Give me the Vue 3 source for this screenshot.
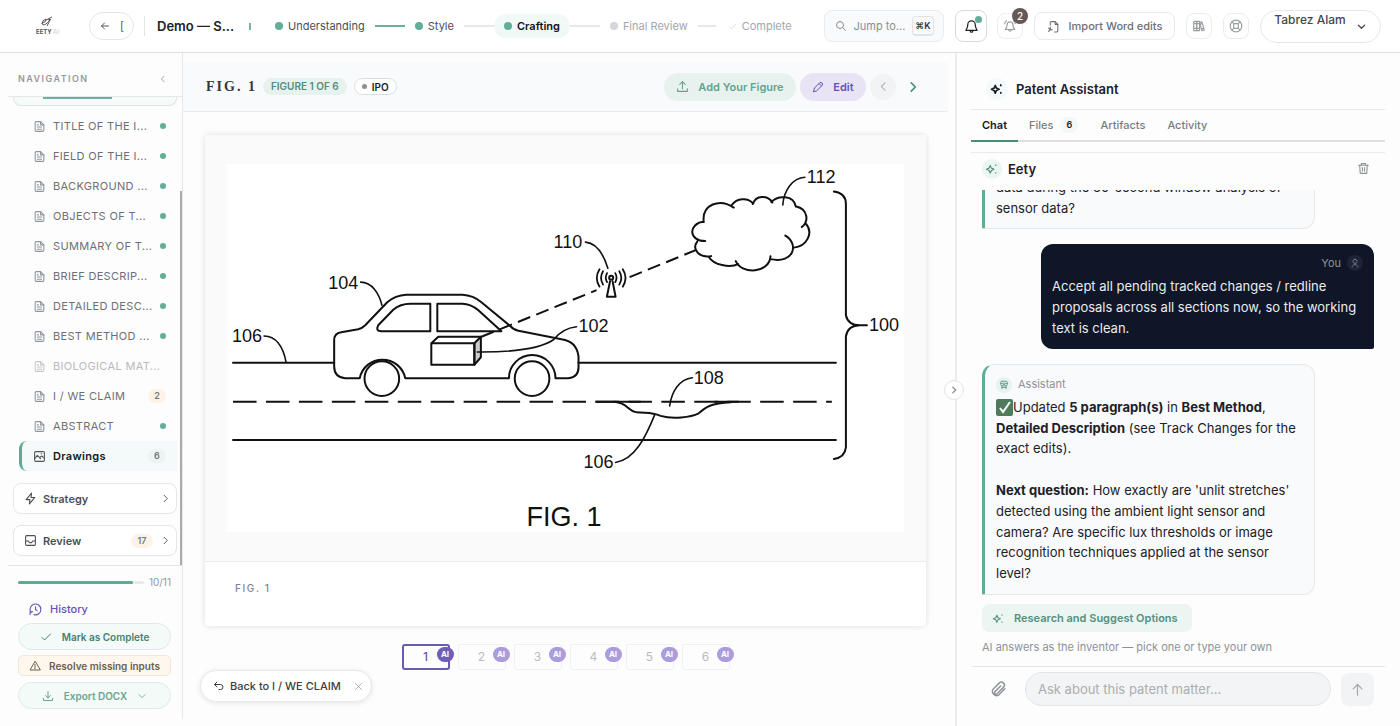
<script setup>
import { h, ref } from 'vue'

const shapes = {
  back: ['M19 12H5', 'M11 6l-6 6 6 6'],
  search: ['M10 3a7 7 0 1 0 0 14a7 7 0 0 0 0-14z', 'M15 15l6 6'],
  bell: ['M12 3a6 6 0 0 0-6 6c0 5-2 7-3 9h18c-1-2-3-4-3-9a6 6 0 0 0-6-6z', 'M10 18v1a2 2 0 0 0 4 0v-1'],
  ring: ['M12 5a5 5 0 0 0-5 5c0 4-1 6-3 8h16c-2-2-3-4-3-8a5 5 0 0 0-5-5z', 'M10 18v1a2 2 0 0 0 4 0v-1', 'M3 8c0-2 1-4 3-5', 'M21 8c0-2-1-4-3-5'],
  importDoc: ['M6 9V5a2 2 0 0 1 2-2h7l5 5v12a2 2 0 0 1-2 2h-4', 'M15 3v5h5', 'M6 13v5h4', 'M3 15l3 3-3 3'],
  books: ['M3 4h5v16H3z', 'M8 4h5v16H8z', 'M3 8h10', 'M3 16h10', 'M13 6l4-1 4 14-4 1z', 'M14 9l4-1', 'M16 17l4-1'],
  buoy: ['M12 2a10 10 0 1 0 0 20a10 10 0 0 0 0-20z', 'M10 8h4q2 0 2 2v4q0 2-2 2h-4q-2 0-2-2v-4q0-2 2-2z', 'M5 5l3 3', 'M19 5l-3 3', 'M5 19l3-3', 'M19 19l-3-3'],
  down: ['M5 9l7 7 7-7'],
  left: ['M15 5l-7 7 7 7'],
  right: ['M9 5l7 7-7 7'],
  doc: ['M14 3H6a2 2 0 0 0-2 2v14a2 2 0 0 0 2 2h12a2 2 0 0 0 2-2V9z', 'M14 3v6h6', 'M8 9h2', 'M8 13h8', 'M8 17h8'],
  image: ['M5 3h14a2 2 0 0 1 2 2v14a2 2 0 0 1-2 2H5a2 2 0 0 1-2-2V5a2 2 0 0 1 2-2z', 'M3 16l5-6 6 6', 'M12 14l4-3 5 4', 'M15 7h1'],
  bolt: ['M14 2L4 14h7l-1 8 10-12h-7z'],
  inbox: ['M5 3h14a2 2 0 0 1 2 2v14a2 2 0 0 1-2 2H5a2 2 0 0 1-2-2V5a2 2 0 0 1 2-2z', 'M3 13h5l2 3h4l2-3h5'],
  history: ['M4 18a10 10 0 1 1 5 3.500', 'M2 21v-5h5', 'M12 7v5l3 2'],
  check: ['M4 13l5 5L21 6'],
  warn: ['M12 3L2 20h20z', 'M12 9v6', 'M12 17v1'],
  download: ['M12 3v13', 'M7 11l5 5 5-5', 'M3 17v4h18v-4'],
  upload: ['M12 16V3', 'M7 8l5-5 5 5', 'M3 16v5h18v-5'],
  pencil: ['M3 21l2-7L16 3q2-1 4 1t1 4L10 19z', 'M14 5l5 5'],
  undo: ['M8 4L3 9l5 5', 'M3 9h12a5 5 0 0 1 0 10h-3'],
  close: ['M4 4l16 16', 'M20 4L4 20'],
  spark: ['M9 6l2 4.500 4.500 2-4.500 2L9 19l-2-4.500-4.500-2 4.500-2z', 'M18.500 5v1', 'M18.500 18v1'],
  trash: ['M3 6h18', 'M8 6V3h8v3', 'M5 6l1 15h12l1-15', 'M10 10v7', 'M14 10v7'],
  person: ['M12 3a5 5 0 1 0 0 10a5 5 0 0 0 0-10z', 'M12 13v3', 'M5 22c0-4 3-6 7-6s7 2 7 6'],
  robot: ['M7 3h10a3 3 0 0 1 3 3v5a3 3 0 0 1-3 3H7a3 3 0 0 1-3-3V6a3 3 0 0 1 3-3z', 'M4 8h16', 'M7 14v7', 'M17 14v7', 'M7 18h10', 'M10 11h4'],
  clip: ['M21 11l-9 9a6 6 0 0 1-8-8l9-9a4 4 0 0 1 6 6l-9 9a2 2 0 0 1-3-3l8-8'],
  up: ['M12 21V4', 'M5 11l7-7 7 7'],
}

const Icon = (props) =>
  h(
    'svg',
    {
      width: props.size || 14,
      height: props.size || 14,
      viewBox: '0 0 24 24',
      fill: 'none',
      stroke: 'currentColor',
      'stroke-width': props.weight || 2,
      'stroke-linecap': 'round',
      'stroke-linejoin': 'round',
      'aria-hidden': 'true',
    },
    shapes[props.name].map((d) => h('path', { d }))
  )
Icon.props = ['name', 'size', 'weight']

const sections = [
  { name: 'TITLE OF THE I...', done: true },
  { name: 'FIELD OF THE I...', done: true },
  { name: 'BACKGROUND ...', done: true },
  { name: 'OBJECTS OF T...', done: true },
  { name: 'SUMMARY OF T...', done: true },
  { name: 'BRIEF DESCRIP...', done: true },
  { name: 'DETAILED DESC...', done: true },
  { name: 'BEST METHOD ...', done: true },
  { name: 'BIOLOGICAL MAT...', muted: true },
  { name: 'I / WE CLAIM', count: 2 },
  { name: 'ABSTRACT', done: true },
]
const figures = [1, 2, 3, 4, 5, 6]
const current = ref(1)
const draft = ref('')
</script>

<template>
  <div class="app">
    <header class="top">
      <svg class="logo" width="26" height="20" viewBox="0 0 26 20" role="img" aria-label="Eety AI">
        <path d="M6 8q0-4 4-5q1 3-4 4q0 3 4 1q3-2 4-5q-1 4-3 7M10 4l6-3M12 3l3 1" fill="none" stroke="#555" stroke-width="1" />
        <text x="0" y="18" class="logo-text">EETY</text>
        <text x="17" y="18" class="logo-text pale">AI</text>
      </svg>
      <button class="back" aria-label="Back"><Icon name="back" :size="12" /><span>[</span></button>
      <span class="rule"></span>
      <h1>Demo — S...</h1>
      <span class="tick"></span>
      <ol class="steps">
        <li><i class="dot"></i>Understanding</li>
        <li class="line done" aria-hidden="true"></li>
        <li><i class="dot"></i>Style</li>
        <li class="line" aria-hidden="true"></li>
        <li class="now"><i class="dot"></i>Crafting</li>
        <li class="line" aria-hidden="true"></li>
        <li class="later"><i class="dot"></i>Final Review</li>
        <li class="line short" aria-hidden="true"></li>
        <li class="later"><Icon name="check" :size="9" />Complete</li>
      </ol>
      <button class="jump"><Icon name="search" :size="12" /><span>Jump to...</span><kbd>⌘K</kbd></button>
      <button class="sq big" aria-label="Notifications"><Icon name="bell" :size="15" /><i class="dot on"></i></button>
      <button class="sq alerts" aria-label="Alerts"><Icon name="ring" :size="14" /><b class="count">2</b></button>
      <button class="import"><Icon name="importDoc" :size="13" />Import Word edits</button>
      <button class="sq lib" aria-label="Library"><Icon name="books" :size="14" /></button>
      <button class="sq help" aria-label="Help"><Icon name="buoy" :size="14" /></button>
      <button class="user"><span>Tabrez Alam</span><Icon name="down" :size="11" :weight="3" /></button>
    </header>

    <div class="body">
      <aside class="side">
        <div class="side-head"><h2>NAVIGATION</h2><button class="bare" aria-label="Collapse"><Icon name="left" :size="10" /></button></div>
        <div class="scroll">
          <div class="clipped"><i></i></div>
          <nav aria-label="Sections">
            <a v-for="s in sections" :key="s.name" href="#" :class="{ muted: s.muted }">
              <Icon name="doc" :size="13" /><span>{{ s.name }}</span>
              <i v-if="s.done" class="dot"></i>
              <em v-if="s.count" class="tag warm">{{ s.count }}</em>
            </a>
            <a href="#" class="active"><Icon name="image" :size="13" /><span>Drawings</span><em class="tag">6</em></a>
          </nav>
          <button class="group"><Icon name="bolt" :size="13" /><span>Strategy</span><Icon name="right" :size="11" /></button>
          <button class="group"><Icon name="inbox" :size="13" /><span>Review</span><em class="tag warm wide">17</em><Icon name="right" :size="11" /></button>
          <i class="thumb"></i>
        </div>
        <div class="side-foot">
          <div class="prog"><div class="track"><i></i></div><span>10/11</span></div>
          <a href="#" class="history"><Icon name="history" :size="13" />History</a>
          <button class="pill mark"><Icon name="check" :size="12" />Mark as Complete</button>
          <button class="pill resolve"><Icon name="warn" :size="12" />Resolve missing inputs</button>
          <button class="pill export"><Icon name="download" :size="12" />Export DOCX<Icon name="down" :size="10" /></button>
        </div>
      </aside>

      <main class="main">
        <div class="bar">
          <h2>FIG. 1</h2>
          <span class="chip">FIGURE 1 OF 6</span>
          <span class="ipo"><i></i>IPO</span>
          <button class="add"><Icon name="upload" :size="13" />Add Your Figure</button>
          <button class="edit"><Icon name="pencil" :size="12" />Edit</button>
          <button class="round" aria-label="Previous"><Icon name="left" :size="13" /></button>
          <button class="next" aria-label="Next"><Icon name="right" :size="14" :weight="3" /></button>
        </div>

        <div class="canvas">
          <figure class="card">
            <div class="paper">
              <svg viewBox="228 164 676 367" role="img" aria-label="Vehicle on a road communicating with a cloud" fill="none" stroke="#111" stroke-width="2" stroke-linecap="round" stroke-linejoin="round">
                <path d="M234 362.500H335M579 362.500H836M234 439.500H836" />
                <path d="M234 401.500H832" stroke-dasharray="23.500 9.400" stroke-linecap="butt" />
                <path d="M715 401.500H739M596 401.500H641" stroke-linecap="butt" />
                <path d="M360.500 378H346Q335 377 335 366V340Q335 333 342 332L359 329Q363 328 366 325L388 302Q396 295 407 294.500H463Q474 295 482 302L511 326Q515 330 519 330.500L562 339Q577 341 579 356V367Q579 377 569 378H556A23.200 23.200 0 0 0 509.500 378H406A23.200 23.200 0 0 0 360.500 378" />
                <circle cx="382.600" cy="378.300" r="17.300" />
                <circle cx="532.600" cy="378.300" r="17.300" />
                <path d="M431 331V303.500H411Q401 303.500 394 309.500L379 325Q376 331 382 331ZM438 303.500V331H502L479 310Q471 303.500 463 303.500Z" />
                <path d="M475 343L481.500 336.500V357L475 364.500Z" fill="#ccc" />
                <path d="M432 343H475V364.500H432ZM432 343L439 336.500H481.500" />
                <path d="M482 336.500L597 290M630 277L696 250" stroke-dasharray="13.200 6.500" stroke-linecap="butt" />
                <circle cx="611.600" cy="277.500" r="2" />
                <path d="M610.500 281L607.300 296.500H616L613 281" />
                <path d="M607.500 273q-2.500 4.500 0 9M603.500 271q-4 6.500 0 13.500M600 269q-5.500 8.500 0 17.500M615.700 273q2.500 4.500 0 9M619.700 271q4 6.500 0 13.500M623.200 269q5.500 8.500 0 17.500" stroke-width="1.800" />
                <path d="M704 222C702 204 720 198 734 207.500M732 205C737 198 748 197 753.500 203.500M753 204C756 195 768 195 772.500 202.500M771.500 202C778 195 794 195 796 206.500M796.500 206.500C807 209 810 220 802 227M806 223.500C814 233 807 246 794 247.500M785.500 235.500C799 243 795 264 770.700 259M770.700 256C770 273 742 275 736 261M738.500 264C730 268 714 265 709 256.500M711.500 256C699 258 692 249 697.500 241.500M705.500 241C689 241 688 224 704 221.500" />
                <path d="M615 401.500C629 403 627 410 637 412C649 413 652 412 661 415.500C673 419 691 417 699 413C706 407 710 403 731 402" />
                <g stroke-width="1.600">
                  <path d="M265 335.700C277 336 284 346 287 362M361.500 282C373 282 380 294 382.700 305M586 242C597 243 604 254 608.300 268M805 177.300C793 178 784 190 783 205M692.700 377.500C679 379 672 392 670 405.500M616 462C635 459 646 437 655 414.500M478 351.700C515 352 540 349 554 339.500Q563 328 577 326.500" />
                  <path d="M834 191.500Q846 193 846 204V315Q848 325 860 325H867M860 325Q848 325 846 336V447Q845 457 834 458.500" stroke-width="2" />
                </g>
                <g class="labels">
                  <text x="233" y="342">106</text><text x="329" y="289">104</text><text x="554" y="248">110</text>
                  <text x="807" y="183">112</text><text x="579" y="332">102</text><text x="869" y="331">100</text>
                  <text x="694" y="384">108</text><text x="584" y="468">106</text><text x="527" y="525" class="title">FIG. 1</text>
                </g>
              </svg>
            </div>
            <figcaption>FIG. 1</figcaption>
          </figure>
          <div class="tabs">
            <button v-for="n in figures" :key="n" :class="{ sel: n === current }" @click="current = n">{{ n }}<b>AI</b></button>
          </div>
        </div>
        <div class="return"><a href="#"><Icon name="undo" :size="12" />Back to I / WE CLAIM</a><button class="bare" aria-label="Dismiss"><Icon name="close" :size="9" /></button></div>
        <button class="fold" aria-label="Collapse panel"><Icon name="right" :size="10" :weight="3" /></button>
      </main>

      <section class="chat">
        <div class="chat-head"><span class="orb"><Icon name="spark" :size="14" :weight="3" /></span><h2>Patent Assistant</h2></div>
        <div class="chat-tabs" role="tablist">
          <button role="tab" class="on" aria-selected="true">Chat</button>
          <button role="tab">Files<em>6</em></button>
          <button role="tab">Artifacts</button>
          <button role="tab">Activity</button>
        </div>
        <div class="agent"><span class="orb green"><Icon name="spark" :size="14" /></span><h3>Eety</h3><button class="bare" aria-label="Clear chat"><Icon name="trash" :size="13" /></button></div>
        <div class="log">
          <div class="msg first">data during the 30-second window analysis of sensor data?</div>
          <div class="msg me">
            <div class="who">You<span><Icon name="person" :size="10" /></span></div>
            Accept all pending tracked changes / redline proposals across all sections now, so the working text is clean.
          </div>
          <div class="msg">
            <div class="who"><span><Icon name="robot" :size="10" /></span>Assistant</div>
            <svg class="tickbox" width="17" height="17" viewBox="0 0 17 17" aria-hidden="true"><rect width="17" height="17" rx="2" fill="#4f7a5c" /><path d="M4 9l3 4 7-10" fill="none" stroke="#fff" stroke-width="2" /></svg>Updated <strong>5 paragraph(s)</strong> in <strong>Best Method</strong>, <strong>Detailed Description</strong> (see Track Changes for the exact edits).<br /><br /><strong>Next question:</strong> How exactly are 'unlit stretches' detected using the ambient light sensor and camera? Are specific lux thresholds or image recognition techniques applied at the sensor level?
          </div>
        </div>
        <div class="suggest">
          <button><Icon name="spark" :size="13" />Research and Suggest Options</button>
          <p>AI answers as the inventor — pick one or type your own</p>
        </div>
        <form class="ask" @submit.prevent>
          <button type="button" class="bare" aria-label="Attach"><Icon name="clip" :size="17" /></button>
          <input v-model="draft" type="text" aria-label="Message" placeholder="Ask about this patent matter..." />
          <button class="send" aria-label="Send"><Icon name="up" :size="15" /></button>
        </form>
      </section>
    </div>
  </div>
</template>

<style>
body { margin: 0; background: #fdfdfd; }
</style>

<style scoped>
* { box-sizing: border-box; }
.app { height: 100vh; display: flex; flex-direction: column; overflow: hidden; font: 11px/16px Inter, "Liberation Sans", sans-serif; color: #1c2127; background: #fdfdfd; }
button, input { font: inherit; color: inherit; margin: 0; padding: 0; border: 0; background: none; }
button { display: flex; align-items: center; justify-content: center; }
h1, h2, h3, p, ol, figure { margin: 0; padding: 0; }
a { color: inherit; text-decoration: none; }
svg { flex: none; }
em, i { font-style: normal; }
.dot { width: 8px; height: 8px; border-radius: 50%; background: #62ae98; flex: none; }

.top { flex: none; height: 53px; display: flex; align-items: center; padding: 0 19px 0 36px; border-bottom: 1px solid #dfe0e2; background: #fff; }
.logo-text { font: bold 6px Inter, sans-serif; fill: #555; }
.logo-text.pale { fill: #ddd; }
.back { width: 45px; height: 28px; margin-left: 27px; border: 1px solid #e4e5e7; border-radius: 14px; gap: 9px; color: #555; }
.rule { width: 1px; height: 20px; background: #e2e3e5; margin: 0 12px 0 10px; }
h1 { font-size: 13px; line-height: 20px; font-weight: 600; width: 92px; white-space: nowrap; }
.tick { width: 2px; height: 7px; background: #6fb9a4; }
.steps { display: flex; align-items: center; list-style: none; margin-left: 14px; flex: 1; min-width: 0; white-space: nowrap; color: #4b5056; }
.steps li { display: flex; align-items: center; gap: 5px; padding: 4px 10px; }
.steps .line { padding: 0; width: 30px; height: 2px; background: #e6e7e9; }
.steps .done { background: #6ab19c; }
.steps .short { width: 18px; margin-right: 2px; }
.steps .now { background: #f1f9f7; border-radius: 12px; color: #111; font-weight: 600; }
.steps .later { color: #a3a6aa; }
.steps .later .dot { background: #d5d6d8; }
.steps .later svg { color: #d0d2d4; }
.jump { width: 120px; height: 32px; padding: 0 10px; border: 1px solid #ebecee; border-radius: 8px; background: #f9fafb; color: #8b8f94; gap: 7px; font-size: 11px; white-space: nowrap; }
.jump span { flex: 1; text-align: left; }
kbd { font: 600 9px/17px Inter, sans-serif; color: #333; border: 1px solid #e2e3e5; border-bottom-width: 2px; border-radius: 4px; padding: 0 2px; background: #fafafa; }
.sq { position: relative; width: 26px; height: 26px; border: 1px solid #ececee; border-radius: 8px; color: #9b9ea2; }
.sq.big { width: 32px; height: 32px; margin-left: 11px; border-color: #d9dadc; color: #222; }
.sq .on { position: absolute; top: 5px; right: 4px; width: 7px; height: 7px; }
.alerts { margin-left: 10px; }
.count { position: absolute; top: -6px; right: -6px; width: 16px; height: 16px; border-radius: 50%; background: #655858; color: #fff; font-size: 10px; font-weight: 500; }
.import { width: 141px; height: 28px; margin-left: 11px; border: 1px solid #e8e9eb; border-radius: 8px; gap: 9px; color: #6b6f75; font-weight: 500; white-space: nowrap; }
.lib { margin-left: 11px; }
.help { margin-left: 11px; }
.user { width: 121px; height: 33px; margin-left: 11px; border: 1px solid #e6e7e9; border-radius: 17px; gap: 10px; color: #44484d; font-size: 12px; font-weight: 500; }
.user span { padding-bottom: 12px; }

.body { flex: 1; min-height: 0; display: flex; }
.side { flex: none; width: 183px; margin-bottom: 7px; border-right: 1px solid #e8e8ea; display: flex; flex-direction: column; }
.side-head { height: 44px; margin-left: 8px; padding: 8px 14px 0 10px; display: flex; align-items: center; justify-content: space-between; border-bottom: 1px solid #e5e6e8; }
.side-head h2 { font-size: 9px; font-weight: 600; letter-spacing: 0.16em; color: #96999d; }
.bare { color: #8f9398; }
.scroll { position: relative; flex: 1; min-height: 0; overflow: hidden; padding: 0 5px 0 13px; }
.thumb { position: absolute; right: 0; top: 94px; bottom: 0; width: 2px; background: #ababab; }
.clipped { height: 9px; border: 1px solid #d9e6e3; border-top: 0; border-radius: 0 0 8px 8px; background: #f6fbfa; padding-left: 29px; }
.clipped i { display: block; width: 69px; height: 2px; background: #6bb29e; }
nav { padding: 5px 0 12px 6px; }
nav a { display: flex; align-items: center; height: 30px; padding: 0 11px 0 14px; letter-spacing: 0.03em; color: #6c7076; white-space: nowrap; }
nav a svg { margin-right: 7px; color: #909499; }
nav a span { flex: 1; }
nav a .dot { width: 6px; height: 6px; }
nav .muted { color: #b8babd; }
nav .muted svg { color: #c5c7c9; }
.tag { width: 18px; height: 14px; border-radius: 7px; background: #edf2f2; color: #74787d; font-size: 9px; line-height: 14px; font-weight: 600; text-align: center; letter-spacing: 0; }
.tag.warm { background: #fcf3e6; }
.tag.wide { width: 22px; margin-right: 7px; }
nav .active { background: #f4faf9; border-left: 3px solid #5faa95; border-radius: 8px 0 0 8px; padding-left: 11px; color: #15191e; font-weight: 600; }
nav .active svg { color: #555; }
.group { width: 100%; height: 31px; border: 1px solid #e5e6e8; border-radius: 8px; background: #fff; padding: 0 5px 0 10px; margin-bottom: 11px; color: #4b4f55; font-weight: 600; }
.group span { flex: 1; text-align: left; margin-left: 6px; }
.side-foot { flex: none; margin-left: 8px; padding: 8px 11px 10px 10px; border-top: 1px solid #e2e3e5; display: flex; flex-direction: column; }
.prog { display: flex; align-items: center; gap: 5px; font-size: 10px; color: #94989c; }
.track { flex: 1; height: 3px; border-radius: 2px; background: #e8eaeb; }
.track i { display: block; width: 91%; height: 3px; border-radius: 2px; background: #62aa96; }
.history { display: flex; align-items: center; gap: 8px; padding: 11px 0 6px 11px; color: #6051b3; font-weight: 500; }
.pill { height: 27px; border: 1px solid #dcebe7; border-radius: 14px; background: #f3faf8; gap: 10px; color: #48806f; font-size: 10px; font-weight: 600; white-space: nowrap; }
.resolve { height: 21px; margin: 5px 0 6px; border-color: #f3e7d6; border-radius: 5px; background: #fdf7ee; color: #6b604f; gap: 8px; }
.export { color: #68a792; }

.main { position: relative; flex: 1; min-width: 0; padding-top: 9px; border-right: 2px solid #ececee; }
.bar { display: flex; align-items: center; height: 50px; margin-right: 7px; padding: 0 28px 0 23px; background: #f9fafb; border-bottom: 1px solid #e9ebed; }
.bar h2 { font: bold 14px/20px "Liberation Serif", serif; letter-spacing: 2px; margin-right: 6px; color: #33373c; }
.chip { height: 17px; padding: 0 8px; border-radius: 9px; background: #e7f2ef; color: #528e7c; font-size: 10px; line-height: 17px; font-weight: 600; margin-right: 7px; }
.ipo { display: flex; align-items: center; gap: 5px; height: 17px; padding: 0 7px; border: 1px solid #dcdddf; border-radius: 9px; background: #fff; font-size: 10px; font-weight: 600; margin-right: auto; }
.ipo i { width: 5px; height: 5px; border-radius: 50%; background: #8d8f92; }
.add, .edit { height: 28px; border-radius: 14px; gap: 9px; font-weight: 600; white-space: nowrap; }
.add { width: 132px; background: #e7f2ee; color: #64a38f; margin-right: 4px; }
.edit { width: 66px; background: #e8e4f5; color: #6653b5; margin-right: 4px; }
.round { width: 26px; height: 26px; border-radius: 50%; background: #f2f3f4; color: #b5b7ba; margin-right: 10px; }
.next { color: #4e927e; }
.canvas { padding: 23px 29px 0 22px; }
.card { border-radius: 4px; background: #fff; box-shadow: 0 0 5px 1px #e6e6e8; }
.paper { padding: 29px 22px; background: #fafafa; border-bottom: 1px solid #ebebed; }
.paper svg { display: block; width: 100%; background: #fff; }
.labels { fill: #111; stroke: none; font: 18px "Liberation Sans Narrow", "Liberation Sans", sans-serif; }
.labels .title { font-size: 27px; }
figcaption { height: 64px; padding: 18px 30px; font-size: 10px; letter-spacing: 0.16em; color: #81858a; font-weight: 500; }
.tabs { display: flex; justify-content: center; gap: 8px; margin-top: 18px; }
.tabs button { position: relative; width: 48px; height: 26px; border: 1px solid #f0f0f2; border-radius: 3px; color: #b9bbbe; font-size: 12px; }
.tabs .sel { border: 2px solid #6a5bb0; color: #6a5bb0; font-weight: 500; }
.tabs b { position: absolute; top: 2px; right: -5px; width: 17px; height: 15px; border-radius: 8px; background: #a99ddc; color: #fff; font-size: 8px; line-height: 15px; font-weight: 700; }
.tabs .sel b { top: 1px; right: -6px; background: #6f5db8; }
.return { position: absolute; left: 17px; bottom: 24px; display: flex; align-items: center; gap: 13px; height: 32px; padding: 0 8px 0 12px; border: 1px solid #e9e9eb; border-radius: 16px; background: #fff; box-shadow: 0 1px 5px #e4e4e6; font-weight: 500; }
.return a { display: flex; align-items: center; gap: 5px; color: #3b3f45; white-space: nowrap; }
.fold { position: absolute; right: -9px; top: 327px; width: 20px; height: 20px; border-radius: 50%; border: 1px solid #e4e4e6; background: #fff; color: #888; z-index: 1; }

.chat { flex: none; width: 443px; padding: 0 15px 0 14px; display: flex; flex-direction: column; }
.chat h2, .chat h3 { font-size: 13px; font-weight: 600; }
.chat-head { height: 57px; padding: 15px 0 0 15px; display: flex; align-items: center; gap: 8px; border-bottom: 1px solid #e7e8ea; }
.orb { width: 22px; height: 22px; border-radius: 50%; background: #f4faf9; display: flex; align-items: center; justify-content: center; }
.orb.green { width: 20px; height: 20px; background: #ebf5f2; color: #528f7d; }
.chat-tabs { display: flex; height: 32px; border-bottom: 2px solid #dfe0e2; }
.chat-tabs button { height: 32px; padding: 0 11px; border-bottom: 2px solid transparent; color: #787c81; font-weight: 500; }
.chat-tabs .on { color: #16191d; font-weight: 600; border-color: #4a8a77; }
.chat-tabs em { width: 18px; margin-left: 7px; border-radius: 8px; background: #f4f7f8; color: #222; font-size: 9px; font-weight: 600; }
.agent { flex: none; height: 38px; margin-top: 10px; padding: 0 15px 6px 11px; display: flex; align-items: center; gap: 6px; border-top: 1px solid #e9eaec; }
.agent h3 { margin-right: auto; }
.log { flex: 1; min-height: 0; overflow: hidden; display: flex; flex-direction: column; justify-content: flex-end; gap: 15px; padding: 0 11px; font-size: 13px; line-height: 1.6; }
.msg { flex: none; width: 333px; padding: 11px 11px 10px; border: 1px solid #e5e8ea; border-left: 3px solid #60ad97; border-radius: 12px 12px 12px 2px; background: #f9fafc; }
.msg.me { align-self: flex-end; padding: 10px 11px; border: 0; border-radius: 12px 12px 2px 12px; background: #0f1628; color: #e9ebee; }
.who { display: flex; align-items: center; gap: 6px; height: 18px; margin-bottom: 3px; font-size: 11px; color: #8d9196; }
.who span { width: 16px; height: 16px; border-radius: 50%; background: #e7f3ef; color: #5b9382; display: flex; align-items: center; justify-content: center; }
.me .who { justify-content: flex-end; margin-bottom: 4px; }
.me .who span { background: #1d2436; color: #777d8b; }
.tickbox { vertical-align: -4px; }
.suggest { flex: none; padding: 9px 11px 0; color: #8e9297; }
.suggest button { height: 28px; padding: 0 14px 0 10px; gap: 9px; border-radius: 7px; background: #ebf5f2; color: #55907e; font-weight: 600; }
.suggest p { margin: 7px 0 11px; }
.ask { flex: none; display: flex; align-items: center; margin-left: 1px; padding: 5px 11px 20px 18px; border-top: 1px solid #e5e6e8; }
.ask input { flex: 1; min-width: 0; height: 34px; margin: 0 10px 0 18px; padding: 0 12px; border: 1px solid #e4e5e7; border-radius: 17px; background: #f3f4f5; font-size: 13px; }
.ask input::placeholder { color: #abaeb2; opacity: 1; }
.send { width: 33px; height: 33px; border-radius: 8px; background: #f2f3f4; color: #a7aaad; }
</style>
